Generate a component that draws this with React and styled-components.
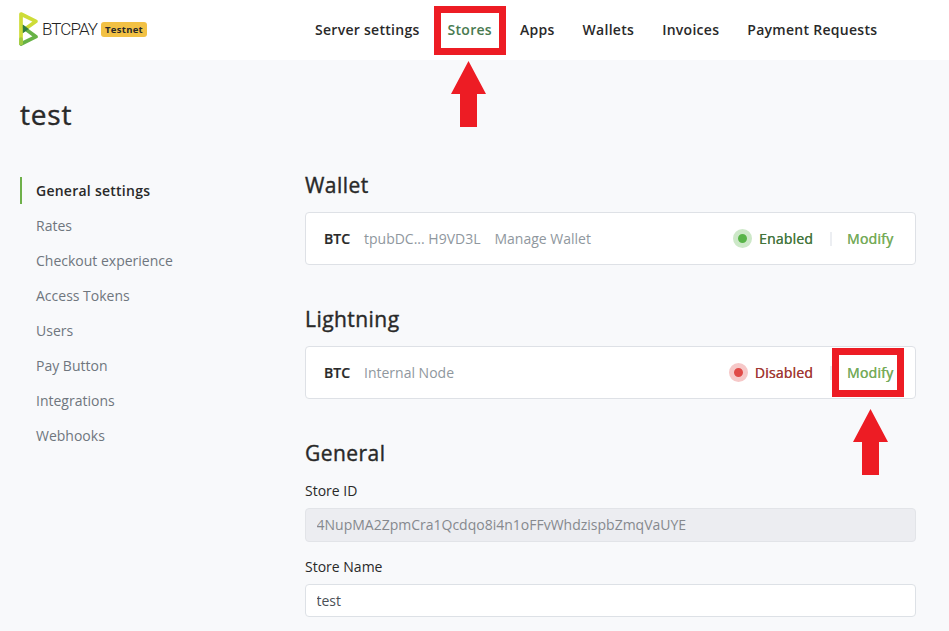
import React from "react";
import styled, { createGlobalStyle } from "styled-components";

const GlobalStyle = createGlobalStyle`
  *, *::before, *::after { box-sizing: border-box; }
  body {
    margin: 0;
    overflow: hidden;
    background: #f8f9fb;
    color: #292929;
    font-family: "Open Sans", "Noto Sans", sans-serif;
    font-size: 14px;
    line-height: 21px;
  }
  h1, h2 { margin: 0; font-weight: 500; -webkit-text-stroke: 0.4px currentColor; }
  a { color: inherit; text-decoration: none; }
`;

const Page = styled.div`
  height: 631px;
  overflow: hidden;
`;

const Header = styled.header`
  display: flex;
  align-items: center;
  height: 60px;
  padding: 0 0 2px 19px;
  background: #fff;
`;

const Brand = styled.a`
  display: flex;
  align-items: center;
  width: 282px;
`;

const LogoMark = styled.svg`
  flex: none;
  margin-right: 3px;
`;

const Wordmark = styled.span`
  width: 59px;
  color: #222;
  font-family: Roboto, sans-serif;
  font-size: 17px;
  font-weight: 300;
  letter-spacing: -0.9px;
`;

const Badge = styled.span`
  flex: none;
  width: 46px;
  height: 15px;
  margin-top: 1px;
  border-radius: 3px;
  background: #f2c144;
  color: #292929;
  font-size: 9.5px;
  font-weight: 700;
  line-height: 16px;
  letter-spacing: 0.3px;
  text-align: center;
`;

const Nav = styled.nav`
  display: flex;
`;

const NavLink = styled.a`
  position: relative;
  padding: 0 14px;
  white-space: nowrap;
  color: ${(p) => (p.$active ? "#497a50" : "#292929")};
  font-weight: 600;
  letter-spacing: 0.28px;
`;

const Layout = styled.main`
  padding: 35px 33px 0 20px;
`;

const Title = styled.h1`
  font-size: 28px;
  line-height: 38px;
  letter-spacing: 0.8px;
`;

const Columns = styled.div`
  display: grid;
  grid-template-columns: 285px 611px;
  margin-top: 38px;
`;

const Sidebar = styled.nav`
  display: flex;
  flex-direction: column;
  gap: 8px;
  padding-top: 6px;
`;

const SideLink = styled.a`
  height: 27px;
  padding-left: 14px;
  border-left: 2px solid ${(p) => (p.$active ? "#6eb04a" : "transparent")};
  color: ${(p) => (p.$active ? "#292929" : "#6f767e")};
  font-weight: ${(p) => (p.$active ? 600 : 400)};
  letter-spacing: ${(p) => (p.$active ? "0.25px" : "normal")};
  line-height: 27px;
`;

const Section = styled.section`
  margin-bottom: 40px;
`;

const SectionTitle = styled.h2`
  height: 28px;
  margin-bottom: 13px;
  font-size: 21px;
  line-height: 28px;
  letter-spacing: 0.45px;
`;

const Card = styled.div`
  display: flex;
  align-items: center;
  height: 53px;
  padding: 0 21px 0 18px;
  border: 1px solid #dee1e6;
  border-radius: 4px;
  background: #fff;
`;

const Currency = styled.strong`
  width: 40px;
  font-weight: 600;
  -webkit-text-stroke: 0.2px currentColor;
`;

const Muted = styled.span`
  margin-right: 14px;
  color: #8f979e;
`;

const Status = styled.span`
  display: flex;
  align-items: center;
  gap: 7px;
  margin-left: auto;
  color: ${(p) => (p.$enabled ? "#44763d" : "#a23a34")};
  font-weight: 500;
  letter-spacing: 0.2px;
  text-shadow: 0.35px 0 0 currentColor;
`;

const Dot = styled.span`
  width: 19px;
  height: 19px;
  border: 5px solid ${(p) => (p.$enabled ? "#cde8c8" : "#f6c8c8")};
  border-radius: 50%;
  background: ${(p) => (p.$enabled ? "#58b448" : "#e04a47")};
`;

const Divider = styled.span`
  width: 2px;
  height: 14px;
  margin: 0 15px 0 17px;
  background: #eceef2;
`;

const Modify = styled.a`
  position: relative;
  width: 47px;
  color: #75ab59;
  font-weight: 500;
  letter-spacing: 0.25px;
  text-shadow: 0.35px 0 0 currentColor;
`;

const Label = styled.label`
  display: block;
  margin-bottom: 7px;
`;

const Input = styled.input`
  display: block;
  width: 100%;
  height: ${(p) => (p.disabled ? 34 : 33)}px;
  margin-bottom: 14px;
  padding: 0 10.5px ${(p) => (p.disabled ? 1 : 0)}px;
  border: 1px solid ${(p) => (p.disabled ? "#e2e4e8" : "#dde1e6")};
  border-radius: 4px;
  background: ${(p) => (p.disabled ? "#ecedf1" : "#fff")};
  color: ${(p) => (p.disabled ? "#86898e" : "#4b5056")};
  font: inherit;
`;

const Highlight = styled.span`
  position: absolute;
  top: ${(p) => p.$top}px;
  left: ${(p) => p.$left}px;
  width: 72px;
  height: 49px;
  border: 7px solid #ed1c24;
  pointer-events: none;
`;

const Arrow = styled.svg`
  position: absolute;
  top: ${(p) => p.$top}px;
  left: ${(p) => p.$left}px;
`;

function Callout({ top, left, arrowTop, arrowLeft }) {
  return (
    <Highlight $top={top} $left={left}>
      <Arrow $top={arrowTop} $left={arrowLeft} width="35" height="66" viewBox="0 0 35 66">
        <path d="M17.5 0 L35 33 H26 V66 H9 V33 H0 Z" fill="#ed1c24" />
      </Arrow>
    </Highlight>
  );
}

function Logo() {
  return (
    <LogoMark width="20" height="34" viewBox="0 0 20 34">
      <g fill="none" strokeWidth="3.7" strokeLinecap="round" strokeLinejoin="round">
        <path d="M2 32 L17 24.7 L3 14.5" stroke="#67b246" />
        <path d="M2 31 V2 L17 9.3 L3 19.2" stroke="#cedc38" />
        <path d="M2 27 V31" stroke="#9fca42" />
      </g>
      <path d="M3.8 12.6 L9.8 17 L3.8 21.3 Z" fill="#2f7a43" />
    </LogoMark>
  );
}

function StoreCard({ detail, link, enabled, children }) {
  return (
    <Card>
      <Currency>BTC</Currency>
      <Muted>{detail}</Muted>
      {link && <Muted as="a">{link}</Muted>}
      <Status $enabled={enabled}>
        <Dot $enabled={enabled} />
        {enabled ? "Enabled" : "Disabled"}
      </Status>
      <Divider />
      <Modify>Modify{children}</Modify>
    </Card>
  );
}

const navItems = ["Server settings", "Stores", "Apps", "Wallets", "Invoices", "Payment Requests"];
const sideItems = [
  "General settings",
  "Rates",
  "Checkout experience",
  "Access Tokens",
  "Users",
  "Pay Button",
  "Integrations",
  "Webhooks",
];

export default function App() {
  return (
    <Page>
      <GlobalStyle />
      <Header>
        <Brand>
          <Logo />
          <Wordmark>BTCPAY</Wordmark>
          <Badge>Testnet</Badge>
        </Brand>
        <Nav>
          {navItems.map((item) => (
            <NavLink key={item} $active={item === "Stores"}>
              {item}
              {item === "Stores" && <Callout top={-13} left={0.3} arrowTop={48} arrowLeft={10} />}
            </NavLink>
          ))}
        </Nav>
      </Header>
      <Layout>
        <Title>test</Title>
        <Columns>
          <Sidebar>
            {sideItems.map((item, i) => (
              <SideLink key={item} $active={i === 0}>{item}</SideLink>
            ))}
          </Sidebar>
          <div>
            <Section>
              <SectionTitle>Wallet</SectionTitle>
              <StoreCard detail="tpubDC... H9VD3L" link="Manage Wallet" enabled />
            </Section>
            <Section>
              <SectionTitle>Lightning</SectionTitle>
              <StoreCard detail="Internal Node" enabled={false}>
                <Callout top={-14} left={-15} arrowTop={54} arrowLeft={14} />
              </StoreCard>
            </Section>
            <Section>
              <SectionTitle>General</SectionTitle>
              <Label htmlFor="store-id">Store ID</Label>
              <Input id="store-id" disabled defaultValue="4NupMA2ZpmCra1Qcdqo8i4n1oFFvWhdzispbZmqVaUYE" />
              <Label htmlFor="store-name">Store Name</Label>
              <Input id="store-name" defaultValue="test" />
            </Section>
          </div>
        </Columns>
      </Layout>
    </Page>
  );
}
